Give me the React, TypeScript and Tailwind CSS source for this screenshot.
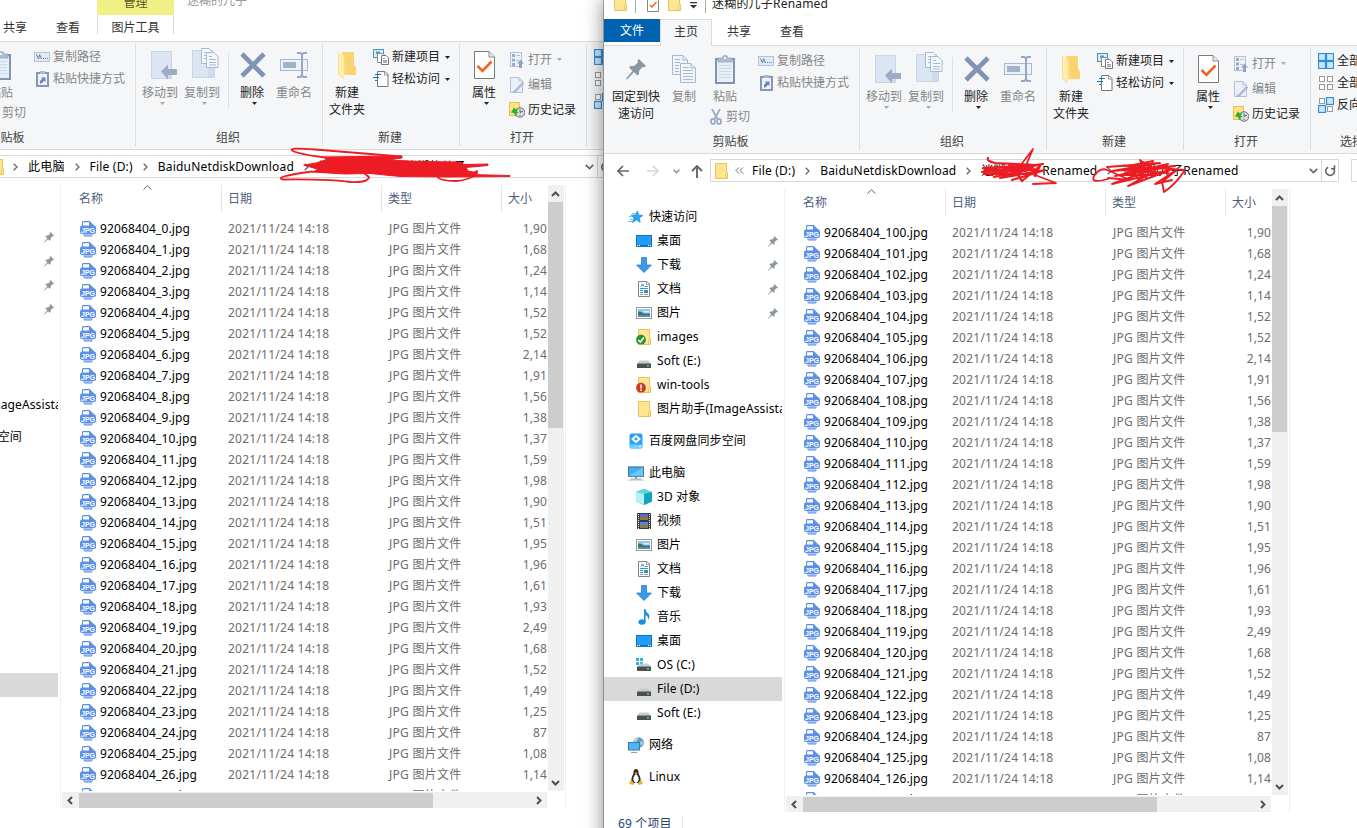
import React from "react";

type Kids = { children?: React.ReactNode };

/* ---------- ribbon icons ---------- */

const PinBig = () => (
  <svg width="20" height="21" viewBox="0 0 20 21" fill="#8a97a1">
    <path d="M13 0 20 7 18 8.500 16.500 8 13 12 13 15 11.500 16.500 8 13 1.500 20 0 20.500 0.500 19 6.500 12 3 8.500 4.500 7 8 7 12 3.500 11.500 1.500Z" />
  </svg>
);

const PinSmall = () => (
  <svg width="10" height="11" viewBox="0 0 10 11" fill="#8a97a1">
    <path d="M6.500 0 10 3.700 9 4.500 8.200 4.300 6.600 6.300 6.600 8 5.600 8.800 4 7.200 0.700 10.500 0 10.500 3.200 6.300 1.400 4.500 2.300 3.500 4.100 3.500 6 1.900 5.700 0.900Z" />
  </svg>
);

const CopyBig = () => (
  <svg width="24" height="28" viewBox="0 0 24 28">
    <g fill="#f0f4fb" stroke="#a9b7d0">
      <path d="M.5.500H11L15.500 5V19.500H.5Z" />
      <path d="M8.500 8.500H19L23.500 13V27.500H8.500Z" />
      <path d="M11 .5V5H15.500M19 8.500V13H23.500" fill="none" />
      <path d="M3 4.500H8M3 7.500H8M3 10.500H7M3 13.500H7M3 16.500H7M11 12.500H17M11 15.500H21M11 18.500H21M11 21.500H21M11 24.500H21" />
    </g>
  </svg>
);

const PasteBig = () => (
  <svg width="20" height="29" viewBox="0 0 20 29">
    <rect x="1" y="4" width="18" height="24" fill="#e9eff9" stroke="#8093b4" strokeWidth="2" />
    <path d="M4 10.500H16M4 13.500H16M4 16.500H16M4 19.500H16M4 22.500H16" stroke="#ccd7e8" />
    <path d="M3 7V3H7L8 .8H12L13 3H17V7Z" fill="#afbdd3" stroke="#8fa0bd" strokeWidth=".7" />
    <circle cx="10" cy="3" r="1" fill="#fff" />
  </svg>
);

const Scissors = () => (
  <svg width="12" height="16" viewBox="0 0 12 16" fill="none" stroke="#9dabc5" strokeWidth="1.800">
    <path d="M2 0 7.500 10M10 0 4.500 10" />
    <ellipse cx="2.900" cy="12.500" rx="2" ry="2.600" />
    <ellipse cx="9.100" cy="12.500" rx="2" ry="2.600" />
  </svg>
);

const CopyPath = () => (
  <svg width="16" height="10" viewBox="0 0 16 10">
    <rect x=".5" y=".5" width="15" height="9" fill="#e1e9f5" stroke="#b3c3db" />
    <path d="M2.500 2.500 4.500 7M5.500 2.500 7.500 7M4.500 7 5.500 3" stroke="#6a7f9f" fill="none" />
    <path d="M9 6.500H10M11 6.500H12M13 6.500H14" stroke="#6a7f9f" />
  </svg>
);

const PasteLink = () => (
  <svg width="13" height="16" viewBox="0 0 13 16">
    <rect x="1" y="2" width="11" height="13" fill="#edf2fa" stroke="#8497b7" strokeWidth="2" />
    <rect x="4" y="0" width="5" height="3" fill="#a9b8d0" />
    <path d="M4 12.500V10L6 8 5 6.500H9.500V11L8 9.800 5.500 12.500Z" fill="#6d83ab" />
  </svg>
);

const MoveTo = () => (
  <svg width="26" height="29" viewBox="0 0 26 29">
    <rect x=".5" y=".5" width="20" height="27" fill="#dbe5f4" stroke="#c8d5e8" />
    <path d="M17 20H21V27.500H17Z" fill="#cedaeb" />
    <path d="M10 20.500 17 13.500V18H26V24H17V28.500Z" fill="#9dabc5" />
  </svg>
);

const CopyTo = () => (
  <svg width="27" height="31" viewBox="0 0 27 31">
    <rect x=".5" y="2.500" width="20" height="27" fill="#dbe5f4" stroke="#c8d5e8" />
    <path d="M17 20H22.500V29.500H17Z" fill="#d1ddee" stroke="#c8d5e8" />
    <g fill="#f4f7fc" stroke="#a9b7d0">
      <path d="M9.500.5H17L20.500 4V15.500H9.500Z" />
      <path d="M14.500 4.500H22L26 8.500V19.500H14.500Z" />
      <path d="M12 4.500H14M12 7.500H14M12 10.500H14M17 8.500H20M17 11.500H24M17 14.500H24M17 17H24" />
    </g>
  </svg>
);

const DeleteX = () => (
  <svg width="26" height="26" viewBox="0 0 26 26">
    <path d="M2 2 24 24M24 2 2 24" stroke="#8193b4" strokeWidth="4.600" />
  </svg>
);

const Rename = () => (
  <svg width="28" height="26" viewBox="0 0 28 26">
    <rect x=".5" y="7.500" width="27" height="11" fill="#edf2fa" stroke="#a9b7d0" />
    <rect x="3" y="10" width="13" height="6" fill="#a3b2cb" />
    <path d="M17 1H20.500L22 2.500 23.500 1H27M17 25H20.500L22 23.500 23.500 25H27M22 2V24" fill="none" stroke="#98a8c3" strokeWidth="2" />
  </svg>
);

const FolderBig = () => (
  <svg width="18" height="27" viewBox="0 0 18 27">
    <path d="M4 0H16V13L18 16V23H4Z" fill="#fcd97b" />
    <path d="M7 0H16V13L18 16V23H10Z" fill="#f8cf68" opacity=".65" />
    <path d="M0 0 6 4V27L0 22.500Z" fill="#ffedac" />
    <path d="M.4.500V22.500L5.600 26.500" fill="none" stroke="#f9dd8b" />
  </svg>
);

const NewItem = () => (
  <svg width="16" height="16" viewBox="0 0 16 16">
    <rect x=".5" y=".5" width="10" height="8" fill="#d8edf5" stroke="#4696b8" />
    <path d="M3 2.500H7V5H3Z" fill="#6f97a8" />
    <path d="M4.500 4.500H10L11.500 6V13.500H4.500Z" fill="#fff" stroke="#8b8b8b" />
    <path d="M8.500 6.500H13L15.500 9V15.500H8.500Z" fill="#fff" stroke="#777" />
    <path d="M10 9.500H12M10 11.500H14M10 13.500H14" stroke="#86abe0" />
    <path d="M10 12.500H14" stroke="#eca8a8" />
  </svg>
);

const EasyAccess = () => (
  <svg width="16" height="16" viewBox="0 0 16 16">
    <path d="M4.500.5H12L15 3.500V15.500H4.500Z" fill="#fff" stroke="#777" />
    <path d="M11.500.500V4H15" fill="none" stroke="#999" />
    <path d="M2 3.500H8M0 6.500H6M2 9.500H4" stroke="#1573b8" strokeWidth="1.200" />
  </svg>
);

const Properties = () => (
  <svg width="21" height="28" viewBox="0 0 21 28">
    <path d="M.5.500H15L20.500 6V27.500H.5Z" fill="#fff" stroke="#7b7b7b" />
    <path d="M15 .5V6H20.500" fill="#e9e9e9" stroke="#8d8d8d" />
    <path d="M3.500 15 8.500 20 17.500 10.500" fill="none" stroke="#f26522" strokeWidth="2.600" />
  </svg>
);

const OpenIcon = () => (
  <svg width="14" height="16" viewBox="0 0 14 16">
    <rect x=".5" y=".5" width="11" height="14" fill="#edf2fa" stroke="#b4c1d8" />
    <path d="M2 2H5V5H2ZM2 6.500H5V9.500H2ZM2 11H5V14H2Z" fill="#9aabc9" />
    <path d="M6 3.500H10M6 8.500H9" stroke="#b4c1d8" />
    <path d="M10.500 7.500 14 11.500H12V16H9V11.500H7Z" fill="#90a2c3" />
  </svg>
);

const EditIcon = () => (
  <svg width="14" height="16" viewBox="0 0 14 16">
    <path d="M.5.500H9L12.500 4V15.500H.5Z" fill="#eaf0f9" stroke="#b4c1d8" />
    <path d="M9 .5V4H12.500" fill="none" stroke="#b4c1d8" />
    <path d="M13.500 5.500 5 14.500 3 15" stroke="#a9b9d6" strokeWidth="2.500" fill="none" />
  </svg>
);

const HistoryIcon = () => (
  <svg width="16" height="16" viewBox="0 0 16 16">
    <path d="M.5.500H10.500V13.500H.5Z" fill="#fee285" stroke="#e5c14c" />
    <circle cx="11" cy="10.500" r="4.800" fill="#d7dadb" stroke="#6f7475" />
    <path d="M11 7.500V10.500L14 9M8 10.500H9M11 13V14" stroke="#555" strokeWidth=".9" fill="none" />
    <path d="M2 10.500 5 5.500 7 7.500Q9 5.500 10 6 7.500 7.500 7.500 14.500 5.500 14 5 11Z" fill="#28b32c" />
  </svg>
);

const Caret = ({ muted }: { muted?: boolean }) => (
  <svg width="5" height="3" viewBox="0 0 5 3" className="shrink-0">
    <path d="M0 0H5L2.500 3Z" fill={muted ? "#a9a9a9" : "#222"} />
  </svg>
);

const SelectIcon = ({ on }: { on: number[] }) => (
  <svg width="16" height="16" viewBox="0 0 16 16">
    {[[0, 0], [8, 0], [0, 8], [8, 8]].map(([x, y], i) =>
      on.includes(i) ? (
        <rect key={i} x={x + 0.5} y={y + 0.5} width="7" height="7" fill="#cbe6f9" stroke="#2b8fde" strokeWidth="1.200" />
      ) : (
        <rect key={i} x={x + 1.5} y={y + 1.5} width="5" height="5" fill="#fff" stroke="#9a9a9a" />
      )
    )}
  </svg>
);

/* ---------- sidebar icons ---------- */

const Star = () => (
  <svg width="16" height="16" viewBox="0 0 16 16">
    <path d="M9.500 2 10.500 6 15 6.500 11.500 8.800 12.200 13.500 8.500 11 4.500 13.500 5.800 9 3 6.300 7 6Z" fill="#27a5ee" stroke="#1685cc" strokeWidth=".6" />
    <path d="M4 4.500H7M1 7.500H3.500M2 10.500H4.500M0 12.500H4" stroke="#5cc0f5" />
  </svg>
);
const Desktop = () => (
  <svg width="16" height="12" viewBox="0 0 16 12">
    <rect x=".5" y=".5" width="15" height="11" fill="#1e9df8" stroke="#1276c8" />
    <path d="M1 10.500H15" stroke="#0f6cc0" />
    <path d="M1 10.500H2M3 10.500H4M12 10.500H13M14 10.500H15" stroke="#fff" />
  </svg>
);
const Down = () => (
  <svg width="16" height="16" viewBox="0 0 16 16">
    <path d="M5.500.500H10.500V8H15.500L8 15.500.5 8H5.500Z" fill="#3b98ea" stroke="#2d7fcf" strokeWidth=".8" />
  </svg>
);
const Doc = () => (
  <svg width="12" height="16" viewBox="0 0 12 16">
    <path d="M.5.500H9L11.500 3V15.500H.5Z" fill="#fff" stroke="#858585" />
    <path d="M8.500.500V3.500H11.500" fill="none" stroke="#999" />
    <path d="M3 5.500 4.500 2.800 6 5.500" fill="none" stroke="#1687cc" />
    <path d="M7 5.500H10M2 7.500H10M2 9.500H5M2 11.500H5" stroke="#2c9bd8" />
    <path d="M2 13.500H5M6 13.500H10" stroke="#999" />
    <rect x="6" y="9" width="4" height="3" fill="#2c8fbf" />
  </svg>
);
const Picture = () => (
  <svg width="16" height="12" viewBox="0 0 16 12">
    <rect x=".5" y=".5" width="15" height="11" fill="#fff" stroke="#999" />
    <rect x="2" y="2" width="12" height="8" fill="#93c9ed" />
    <path d="M2 4.500Q5 4 8 6.500H14V8H2Z" fill="#3e7371" />
    <path d="M2 8H14V10H2Z" fill="#4c8fb7" />
    <path d="M7 4H13V5.500H9Z" fill="#dceefa" />
  </svg>
);
const Folder = ({ badge }: { badge?: "ok" | "warn" }) => (
  <svg width="16" height="16" viewBox="0 0 16 16">
    <path d="M2.500.500H13.500V9.500H14.500V15.500H2.500Z" fill="#ffe592" stroke="#e8c55c" />
    <path d="M12.500 10.500V15" stroke="#edcc66" />
    {badge && <circle cx="5" cy="10.700" r="4.900" fill={badge === "ok" ? "#2a9233" : "#ce3b24"} />}
    {badge === "ok" && <path d="M2.300 11 4.300 13 8 8.500" fill="none" stroke="#fff" strokeWidth="1.600" />}
    {badge === "warn" && <path d="M5 7.500V11.500M5 12.500V14" stroke="#fff" strokeWidth="1.600" />}
  </svg>
);
const Drive = ({ os }: { os?: boolean }) => (
  <svg width="16" height="14" viewBox="0 0 16 14" className={os ? "" : "mt-[2px]"}>
    {os && <path d="M0 0H3V3H0ZM4 0H7V3H4ZM0 4H3V7H0ZM4 4H7V7H4Z" fill="#28b4ec" />}
    <path d="M3.500 5.500H12.500L15 9H1Z" fill="#c9cbcd" opacity={os ? 0.9 : 1} />
    <rect x="1" y="8.500" width="14" height="4.500" fill="#4c4e50" rx=".5" />
    <rect x="11" y="10" width="2" height="1.500" fill="#4be04e" />
  </svg>
);
const Baidu = () => (
  <svg width="14" height="16" viewBox="0 0 14 16">
    <rect x=".5" y=".5" width="13" height="15" rx="2" fill="#2ba3f7" />
    <path d="M.5 11.500H13.500V14Q13.500 15.500 12 15.500H2Q.5 15.500.5 14Z" fill="#6fd0ff" />
    <path d="M7 3 10.500 6 7 9 3.500 6Z" fill="none" stroke="#fff" strokeWidth="1.800" />
    <path d="M10 13.500H12" stroke="#fff" />
  </svg>
);
const Computer = () => (
  <svg width="17" height="16" viewBox="0 0 17 16">
    <rect x=".5" y="1.500" width="16" height="10" fill="#3faef2" stroke="#3e7390" />
    <path d="M1 11 16 2V11Z" fill="#6bc6fa" />
    <path d="M8 12H9V13.500H8ZM3 14.500H14" stroke="#8094a1" />
    <path d="M0 15.500H17" stroke="#b1bdc6" />
  </svg>
);
const Cube = () => (
  <svg width="16" height="16" viewBox="0 0 16 16">
    <path d="M8 0 16 3V12.500L8 16 0 12.500V3Z" fill="#2fb5c9" />
    <path d="M8 0 16 3 8 6 0 3Z" fill="#5fd5de" />
    <path d="M0 3 8 5V16L0 12.500Z" fill="#b5f1f2" />
    <path d="M8 5 16 3V12.500L8 16Z" fill="#16a3bf" />
  </svg>
);
const Video = () => (
  <svg width="14" height="16" viewBox="0 0 14 16">
    <rect width="14" height="16" fill="#3b3b3b" />
    <rect x="3" y="1" width="8" height="6" fill="#4a6fd6" />
    <rect x="3" y="9" width="8" height="6" fill="#5b86e5" />
    <path d="M3 5 6 3 11 5V7H3ZM3 13 7 11 11 13V15H3Z" fill="#8f7a3d" />
    <path d="M7 3H9V5H7Z" fill="#d9403a" />
    <path d="M1.500 1V16M12.500 1V16" stroke="#fff" strokeDasharray="1 1" />
  </svg>
);
const Music = () => (
  <svg width="12" height="16" viewBox="0 0 12 16" fill="#1a8fe3">
    <ellipse cx="4" cy="13" rx="3.600" ry="2.700" />
    <path d="M6 0H7.500Q8 3 10.500 5 12.500 7.500 10 11 10.700 7.500 7.600 6V13H6Z" />
  </svg>
);
const Network = () => (
  <svg width="16" height="16" viewBox="0 0 16 16">
    <circle cx="10.500" cy="5.500" r="5.300" fill="#5c9fc0" />
    <path d="M6 3Q9 0 10 1L9 4 6 5ZM12 5 14.500 4V7L13 8.500Z" fill="#b5d8e8" />
    <rect x=".5" y="5.500" width="11" height="7.500" fill="#50b7f7" stroke="#327fa8" />
    <path d="M5 13.500H7.500M3 15.500H9" stroke="#8ea2b0" />
  </svg>
);
const Tux = () => (
  <svg width="14" height="16" viewBox="0 0 14 16">
    <path d="M7 0Q9.500 0 9.500 3.500 9.500 5 11 7.500 12.500 11 11 14H3Q1.500 11 3 7.500 4.500 5 4.500 3.500 4.500 0 7 0Z" fill="#2b2b2b" />
    <path d="M7 5Q9 6.500 9.700 9 10 12.500 7 14 4 12.500 4.300 9 5 6.500 7 5Z" fill="#fff" />
    <path d="M5.500 4 7 3.300 8.500 4 7 5.500Z" fill="#f0b52e" />
    <path d="M.5 13 2.500 11 5.300 14.500 4 16 .5 15ZM13.500 13 11.500 11 8.700 14.500 10 16 13.500 15Z" fill="#e5ac2f" />
  </svg>
);

const JpgIcon = () => (
  <svg width="16" height="16" viewBox="0 0 16 16" className="shrink-0">
    <path d="M2.500 6V1.500Q2.500.600 3.500.600H9.500L13.500 4.500V6" fill="#fff" stroke="#5b90e6" strokeWidth="1.100" />
    <path d="M9 .5 13.500 5H9Z" fill="#5b90e6" />
    <path d="M2 11H14L12.500 15H3.500Z" fill="#a6c5f8" />
    <path d="M4 15H12" stroke="#5b90e6" />
    <rect x="0" y="4.500" width="16" height="8.500" rx="2" fill="#5b90e6" />
    <text x="8" y="11.700" textAnchor="middle" fontSize="8" fontWeight="700" textLength="14" lengthAdjust="spacingAndGlyphs" fill="#fff" fontFamily="Liberation Sans, sans-serif">JPG</text>
  </svg>
);

/* ---------- ribbon pieces ---------- */

const Group = ({ label, className, children }: Kids & { label: string; className: string }) => (
  <div className={`flex h-[107px] shrink-0 flex-col ${className}`}>
    <div className="flex h-[88px] shrink-0">{children}</div>
    <div className="pr-0.5 text-center leading-4 text-[#444]">{label}</div>
  </div>
);

const GroupLine = () => <div className="mt-0.5 h-[102px] w-px shrink-0 bg-[#dcdee0]" />;

const Big = ({ icon, lines, muted, caret, className }: {
  icon: React.ReactNode; lines: string[]; muted?: boolean; caret?: boolean; className: string;
}) => (
  <div className={`flex shrink-0 flex-col items-center ${className} ${muted ? "text-[#848688]" : "text-[#222]"}`}>
    <div className="flex h-[42px] items-center justify-center pt-1">{icon}</div>
    {lines.map((l) => (
      <div key={l} className="whitespace-nowrap leading-[17px]">{l}</div>
    ))}
    {caret && <div className="mt-px flex h-0.5 pl-1"><Caret muted={muted} /></div>}
  </div>
);

const Small = ({ icon, text, muted, caret, className = "h-[22px]" }: {
  icon: React.ReactNode; text: string; muted?: boolean; caret?: boolean; className?: string;
}) => (
  <div className={`flex items-center whitespace-nowrap ${className} ${muted ? "text-[#848688]" : "text-[#222]"}`}>
    <div className="mr-[3px] flex w-4 justify-center">{icon}</div>
    <span className="mr-[5px]">{text}</span>
    {caret && <Caret muted={muted} />}
  </div>
);

const Ribbon = () => (
  <div className="flex h-[108px] shrink-0 border-b border-[#d9dadb] bg-[#f5f6f7]">
    <Group label="剪贴板" className="w-[255px]">
      <Big icon={<PinBig />} lines={["固定到快", "速访问"]} className="ml-1 w-14" />
      <Big icon={<CopyBig />} lines={["复制"]} muted className="ml-px w-[38px]" />
      <div className="ml-1 flex w-11 shrink-0 flex-col">
        <Big icon={<PasteBig />} lines={["粘贴"]} muted className="mr-2 w-9" />
        <div className="mt-1 flex items-center whitespace-nowrap text-[#848688]">
          <div className="ml-[3px] mr-1"><Scissors /></div>剪切
        </div>
      </div>
      <div className="ml-[7px] pt-1">
        <Small icon={<CopyPath />} text="复制路径" muted />
        <Small icon={<PasteLink />} text="粘贴快捷方式" muted />
      </div>
    </Group>
    <GroupLine />
    <Group label="组织" className="w-[186px]">
      <Big icon={<div className="pl-2"><MoveTo /></div>} lines={["移动到"]} muted caret className="ml-[3px] w-[42px]" />
      <Big icon={<div className="-mt-1 pl-1.5"><CopyTo /></div>} lines={["复制到"]} muted caret className="w-[42px]" />
      <div className="ml-[5px] mt-[11px] h-[55px] w-px shrink-0 bg-[#dcdee0]" />
      <Big icon={<div className="pl-0.5"><DeleteX /></div>} lines={["删除"]} caret className="ml-1 w-[38px]" />
      <Big icon={<Rename />} lines={["重命名"]} muted className="ml-[2px] w-[42px]" />
    </Group>
    <GroupLine />
    <Group label="新建" className="w-[136px]">
      <Big icon={<FolderBig />} lines={["新建", "文件夹"]} className="ml-[3px] w-[42px]" />
      <div className="ml-[5px] pt-1">
        <Small icon={<NewItem />} text="新建项目" caret />
        <Small icon={<EasyAccess />} text="轻松访问" caret />
      </div>
    </Group>
    <GroupLine />
    <Group label="打开" className="w-[126px]">
      <Big icon={<Properties />} lines={["属性"]} caret className="ml-1 w-10" />
      <div className="ml-[5px] pt-[5px]">
        <Small icon={<OpenIcon />} text="打开" muted caret className="h-[25px]" />
        <Small icon={<EditIcon />} text="编辑" muted className="h-[25px]" />
        <Small icon={<HistoryIcon />} text="历史记录" className="h-[25px]" />
      </div>
    </Group>
    <GroupLine />
    <Group label="选择" className="w-[84px]">
      <div className="ml-[7px] pt-1">
        <Small icon={<SelectIcon on={[0, 1, 2, 3]} />} text="全部选择" />
        <Small icon={<SelectIcon on={[]} />} text="全部取消" />
        <Small icon={<SelectIcon on={[1, 2]} />} text="反向选择" />
      </div>
    </Group>
  </div>
);

/* ---------- address bar ---------- */

const Sep = ({ className = "mx-[10px]" }: { className?: string }) => (
  <svg width="5" height="8" viewBox="0 0 5 8" className={`shrink-0 ${className}`}>
    <path d="M.7.700 4 4 .7 7.300" fill="none" stroke="#666" strokeWidth="1.300" />
  </svg>
);

const AddressRow = ({ crumbs, collapsed }: { crumbs: string[]; collapsed?: boolean }) => (
  <div className="flex h-8 shrink-0 items-start pt-[5px]">
    <div className="flex h-6 w-[106px] shrink-0 items-center pl-[13px]">
      <svg width="12" height="12" viewBox="0 0 12 12" fill="none" stroke="#666" strokeWidth="1.700"><path d="M6 1 1 6 6 11M1 6H12" /></svg>
      <svg width="12" height="12" viewBox="0 0 12 12" fill="none" stroke="#d8d8d8" strokeWidth="1.700" className="ml-[18px]"><path d="M6 1 11 6 6 11M11 6H0" /></svg>
      <svg width="7" height="5" viewBox="0 0 7 5" fill="none" stroke="#888" strokeWidth="1.400" className="ml-[14px]"><path d="M.6.800 3.500 3.700 6.400.800" /></svg>
      <svg width="12" height="13" viewBox="0 0 12 13" fill="none" stroke="#666" strokeWidth="1.900" className="ml-[11px]"><path d="M1 6 6 1 11 6M6 1V13" /></svg>
    </div>
    <div className="flex h-[23px] w-[629px] shrink-0 border border-[#d9d9d9] bg-white">
      <div className="flex min-w-0 flex-1 items-center overflow-hidden whitespace-nowrap pl-0.5 text-black">
        <div className="w-4 shrink-0"><Folder /></div>
        {collapsed ? (
          <svg width="9" height="7" viewBox="0 0 9 7" className="ml-[6px] mr-[8px] shrink-0">
            <path d="M4 .5 1 3.500 4 6.500M8 .5 5 3.500 8 6.500" fill="none" stroke="#666" />
          </svg>
        ) : (
          <Sep className="ml-[8px] mr-[10px]" />
        )}
        {crumbs.map((c, i) => (
          <React.Fragment key={i}>
            {i > 0 && <Sep />}
            <span className="tracking-[0.190px]">{c}</span>
          </React.Fragment>
        ))}
      </div>
      <div className="flex w-[13px] shrink-0 items-center">
        <svg width="9" height="6" viewBox="0 0 9 6" className="ml-px shrink-0">
          <path d="M.8.800 4.500 4.500 8.200.800" fill="none" stroke="#666" strokeWidth="1.700" />
        </svg>
      </div>
      <div className="flex w-[17px] shrink-0 items-center justify-center border-l border-[#d9d9d9]">
        <svg width="11" height="12" viewBox="0 0 11 12" fill="none" stroke="#666" strokeWidth="1.600">
          <path d="M3.200 2.200A4.300 4.300 0 1 0 8.500 3.500" />
          <path d="M6 3.800H9.500V.2" />
        </svg>
      </div>
    </div>
    <div className="ml-3 h-[23px] w-48 shrink-0 border border-[#d9d9d9] bg-white" />
  </div>
);

/* ---------- sidebar ---------- */

type NavItem = { icon: React.ReactNode; text: string; top?: boolean; pin?: boolean; gap?: boolean; active?: boolean };

const NAV: NavItem[] = [
  { icon: <Star />, text: "快速访问", top: true },
  { icon: <Desktop />, text: "桌面", pin: true },
  { icon: <Down />, text: "下载", pin: true },
  { icon: <Doc />, text: "文档", pin: true },
  { icon: <Picture />, text: "图片", pin: true },
  { icon: <Folder badge="ok" />, text: "images" },
  { icon: <Drive />, text: "Soft (E:)" },
  { icon: <Folder badge="warn" />, text: "win-tools" },
  { icon: <Folder />, text: "图片助手(ImageAssistant)" },
  { icon: <Baidu />, text: "百度网盘同步空间", top: true, gap: true },
  { icon: <Computer />, text: "此电脑", top: true, gap: true },
  { icon: <Cube />, text: "3D 对象" },
  { icon: <Video />, text: "视频" },
  { icon: <Picture />, text: "图片" },
  { icon: <Doc />, text: "文档" },
  { icon: <Down />, text: "下载" },
  { icon: <Music />, text: "音乐" },
  { icon: <Desktop />, text: "桌面" },
  { icon: <Drive os />, text: "OS (C:)" },
  { icon: <Drive />, text: "File (D:)", active: true },
  { icon: <Drive />, text: "Soft (E:)" },
  { icon: <Network />, text: "网络", top: true, gap: true },
  { icon: <Tux />, text: "Linux", top: true, gap: true },
];

const Sidebar = () => (
  <div className="w-[178px] shrink-0 overflow-hidden pt-[19px] text-black">
    {NAV.map((n, i) => (
      <div
        key={i}
        className={`flex h-6 items-center overflow-hidden whitespace-nowrap ${n.top ? "pl-6" : "pl-8"} ${n.gap ? "mt-2" : ""} ${n.active ? "bg-[#d9d9d9]" : ""}`}
      >
        <div className="mr-[5px] flex w-4 shrink-0 justify-center">{n.icon}</div>
        <span className={n.pin ? "flex-1" : "tracking-[0.120px]"}>{n.text}</span>
        {n.pin && <div className="mr-[4px]"><PinSmall /></div>}
      </div>
    ))}
  </div>
);

/* ---------- file list ---------- */

const SIZES = ["1,90", "1,68", "1,24", "1,14", "1,52", "1,52", "2,14", "1,91", "1,56", "1,38", "1,37", "1,59", "1,98", "1,90", "1,51", "1,95", "1,96", "1,61", "1,93", "2,49", "1,68", "1,52", "1,49", "1,25", "87", "1,08", "1,14", "1,33"];

const Head = ({ text, className }: { text: string; className: string }) => (
  <div className={`h-[27px] shrink-0 border-r border-[#e5e5e5] pt-1 leading-[20px] text-[#4c607a] ${className}`}>{text}</div>
);

const Arrow = ({ d, w, h }: { d: string; w: number; h: number }) => (
  <svg width={w} height={h} viewBox={`0 0 ${w} ${h}`} fill="none" stroke="#505050" strokeWidth="2"><path d={d} /></svg>
);

const FileList = ({ start }: { start: number }) => (
  <div className="ml-0.5 mt-[3px] flex h-[624px] w-[506px] shrink-0 flex-col border-x border-[#f1f1f1] pl-px">
    <div className="flex h-[606px] shrink-0">
      <div className="flex w-[486px] shrink-0 flex-col overflow-hidden">
        <div className="flex h-[33px] shrink-0">
          <div className="relative flex">
            <Head text="名称" className="w-[160px] pl-[17px]" />
            <svg width="9" height="5" viewBox="0 0 9 5" className="absolute left-[81px] top-0"><path d="M.5 4.500 4.500.700 8.500 4.500" fill="none" stroke="#666" /></svg>
          </div>
          <Head text="日期" className="w-[160px] pl-1.5" />
          <Head text="类型" className="w-[120px] pl-1.5" />
          <div className="pl-1.5 pt-1 leading-[20px] text-[#4c607a]">大小</div>
        </div>
        {SIZES.map((s, i) => (
          <div key={i} className="flex h-[21px] shrink-0 items-center whitespace-nowrap text-[#6d6d6d]">
            <div className="flex w-[166px] items-center pl-[18px]">
              <JpgIcon />
              <span className="ml-1 tracking-[0.140px] text-black">{`92068404_${start + i}.jpg`}</span>
            </div>
            <span className="w-40 tracking-[0.240px]">2021/11/24 14:18</span>
            <span className="w-[110px] pl-px tracking-[0.250px]">JPG 图片文件</span>
            <span className="w-[49px] text-right tracking-[0.100px]">{s}</span>
          </div>
        ))}
      </div>
      <div className="flex w-4 shrink-0 flex-col items-center bg-[#f0f0f0]">
        <div className="flex h-[17px] w-full items-center justify-center pr-px pt-px"><Arrow w={9} h={6} d="M1 5 4.500 1.500 8 5" /></div>
        <div className="mr-px h-[226px] w-[15px] bg-[#cdcdcd]" />
        <div className="flex flex-1 items-end pb-[5px] pr-px"><Arrow w={9} h={6} d="M1 1 4.500 4.500 8 1" /></div>
      </div>
    </div>
    <div className="mt-px flex h-4 w-[485px] shrink-0 items-center bg-[#f0f0f0]">
      <div className="flex w-[17px] justify-center pr-0.5"><Arrow w={6} h={9} d="M5 1 1.500 4.500 5 8" /></div>
      <div className="h-[15px] w-[354px] bg-[#cdcdcd]" />
      <div className="flex flex-1 justify-end pr-[5px]"><Arrow w={6} h={9} d="M1 1 4.500 4.500 1 8" /></div>
    </div>
  </div>
);

/* ---------- window ---------- */

const Tab = ({ text, className }: { text: string; className: string }) => (
  <div className={`shrink-0 text-center ${className}`}>{text}</div>
);

const Explorer = ({ title, crumbs, start, collapsed, pictureTools, className }: {
  title: string; crumbs: string[]; start: number; collapsed?: boolean; pictureTools?: boolean; className: string;
}) => (
  <div className={`absolute flex h-[860px] flex-col bg-white ${className}`}>
    <div className="flex h-[19px] shrink-0 overflow-hidden whitespace-nowrap">
      {pictureTools ? (
        <>
          <div className="ml-[217px] w-[77px] bg-[#f1f086] pt-[2px] text-center leading-[10px] text-[#57571f]">管理</div>
          <div className="ml-[13px] -mt-[3px] leading-[16px] text-[#999]">{title}</div>
        </>
      ) : (
        <div className="-mt-[5px] flex h-4 items-center">
          <div className="ml-2 w-4"><Folder /></div>
          <div className="ml-[7px] mt-1 h-4 w-px bg-[#aaa]" />
          <svg width="12" height="16" viewBox="0 0 12 16" className="ml-[11px] mt-0.5">
            <path d="M.5.500H11.500V15.500H.5Z" fill="#fff" stroke="#888" />
            <path d="M3 9 5 11 9.500 6" fill="none" stroke="#f26522" strokeWidth="1.500" />
          </svg>
          <div className="ml-[7px] w-4"><Folder /></div>
          <svg width="7" height="7" viewBox="0 0 7 7" className="ml-2 mt-[5px]"><path d="M0 0H7V1.300H0ZM0 3H7L3.500 6.500Z" fill="#333" /></svg>
          <div className="ml-[8px] mt-1 h-4 w-px bg-[#aaa]" />
          <div className="ml-[6px] mt-0.5 tracking-[0.200px] text-[#222]">{title}</div>
        </div>
      )}
    </div>
    <div className="flex h-[27px] shrink-0 border-b border-[#dadbdc] leading-[26px]">
      <Tab text="文件" className="h-[23px] w-14 bg-[#0063b1] leading-[24px] text-white" />
      <Tab text="主页" className="h-[27px] w-[52px] border border-b-0 border-[#dadbdc] bg-[#f5f6f7] leading-[24px] text-[#333]" />
      <Tab text="共享" className="w-[54px] text-[#333]" />
      <Tab text="查看" className="w-[52px] text-[#333]" />
      {pictureTools && <Tab text="图片工具" className="ml-[3px] h-[19px] w-[77px] border-x border-[#dadbdc] text-[#333]" />}
    </div>
    <Ribbon />
    <AddressRow crumbs={crumbs} collapsed={collapsed} />
    <div className="flex h-[627px] shrink-0">
      <Sidebar />
      <FileList start={start} />
    </div>
    <div className="flex h-[22px] shrink-0 items-center text-[#26456e]">
      <span className="ml-[14px] w-16 tracking-[0.150px]">69 个项目</span>
      <div className="h-4 w-px bg-[#e8e8e8]" />
    </div>
  </div>
);

const Scribbles = () => (
  <svg width="1357" height="828" viewBox="0 0 1357 828" className="pointer-events-none absolute left-0 top-0" fill="none" stroke="#ed1c24" strokeLinecap="round" strokeLinejoin="round">
    <g strokeWidth="1.800">
      <path d="M401 156.500 315 149.500Q286 147 293 151 300 155 345 160" />
      <path d="M312 171.500Q272 177 283 179.500 330 179 350 182 368 183 369 177L364 173" />
      <path d="M437 176Q439 181 456 181 476 179 477 171L468 176" />
    </g>
    <path
      d="M304 165 316 163 328 159 322 157 402 156 402 158 388 160 420 161.500 460 162 464 164.500 488 164 488 165.500 466 167.500 468 171 478 173 470 174.500 510 175.500 510 176.500 450 177 400 176.500 370 173.500 345 174 312 172 318 169.500Z"
      fill="#ed1c24"
      strokeWidth="1"
    />
    <g strokeWidth="2.200">
      <path d="M988 158Q986 161 995 163L1038 165 983 168 1020 171 982 172 1043 164 990 175 1033 167 1000 178 1045 170 1012 180" />
      <path d="M1020 166 1033 149 1027 163 1035 175 1056 183 1033 184" strokeWidth="1.800" />
      <path d="M985 170 1038 170M984 174 1030 174M994 177 1034 169M1010 164 1022 181 1040 166 1035 176" />
      <path d="M1108 179Q1090 184 1094 176 1100 167 1107 170L1130 180 1108 178" strokeWidth="1.800" />
      <path d="M1107 167 1160 163 1112 171 1175 166 1115 176 1168 164 1112 184 1170 170 1128 186 1155 171 1140 160 1146 178 1153 161 1128 166 1185 170Q1175 185 1164 192L1162 182 1178 169 1155 184 1172 180" strokeWidth="1.900" />
      <path d="M1118 175 1160 175M1122 170 1168 173M1130 168 1140 181" />
    </g>
  </svg>
);

export default function App() {
  return (
    <div className="relative h-[828px] w-[1357px] overflow-hidden bg-white font-['Noto_Sans','Noto_Sans_CJK_SC',sans-serif] text-[12px] leading-[16px]">
      <Explorer
        className="-left-[120px] -top-1 w-[890px]"
        title="迷糊的儿子"
        crumbs={["此电脑", "File (D:)", "BaiduNetdiskDownload", "迷糊的儿子", "迷糊的儿子"]}
        start={0}
        pictureTools
      />
      <Explorer
        className="left-[604px] top-0 w-[890px] shadow-[0_0_18px_1px_rgba(0,0,0,0.45),0_0_0_1px_#bdbdbd]"
        title="迷糊的儿子Renamed"
        crumbs={["File (D:)", "BaiduNetdiskDownload", "迷糊的儿子Renamed", "迷糊的儿子Renamed"]}
        start={100}
        collapsed
      />
      <Scribbles />
    </div>
  );
}
